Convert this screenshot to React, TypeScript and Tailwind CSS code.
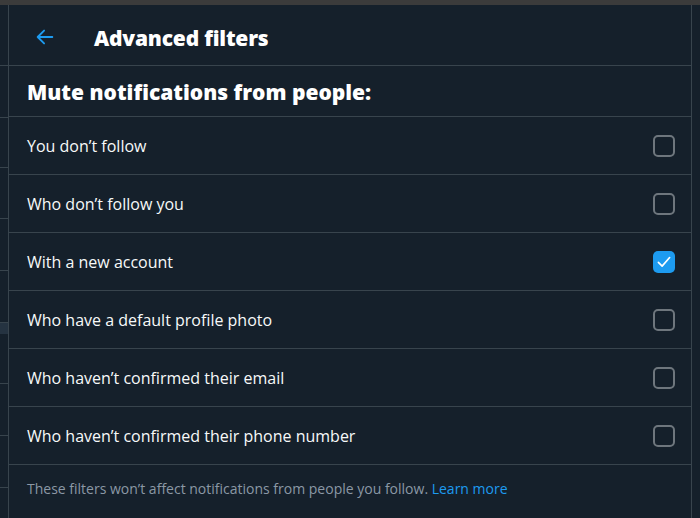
import React from 'react';

const rows = [
  { label: 'You don\u2019t follow', checked: false },
  { label: 'Who don\u2019t follow you', checked: false },
  { label: 'With a new account', checked: true },
  { label: 'Who have a default profile photo', checked: false },
  { label: 'Who haven\u2019t confirmed their email', checked: false },
  { label: 'Who haven\u2019t confirmed their phone number', checked: false },
];

const leftBlocks = ['h-[61px]', 'h-[52px]', 'h-[50px]', 'h-[51px]', 'h-[52px]', 'h-[52px]'];

const Checkbox = ({ checked }: { checked: boolean }) =>
  checked ? (
    <div className="w-[22px] h-[22px] rounded-[5px] bg-[#1d9bf0] flex items-center justify-center">
      <svg viewBox="0 0 24 24" className="w-[18px] h-[18px]" fill="none" stroke="white" strokeWidth="2.2" strokeLinecap="round" strokeLinejoin="round">
        <path d="M4.5 12.5l5 5L19.5 6" />
      </svg>
    </div>
  ) : (
    <div className="w-[22px] h-[22px] rounded-[5px] border-2 border-[#6e767d]" />
  );

export default function App() {
  return (
    <div className="w-[700px] h-[518px] overflow-hidden bg-[#15202b] text-white flex flex-col" style={{ fontFamily: '"Open Sans", "Noto Sans", sans-serif' }}>
      <div className="h-[5px] bg-[#3b3b3b] shrink-0" />
      <div className="flex flex-1 min-h-0">
        {/* left edge of page behind the modal */}
        <div className="w-[9px] border-r border-[#38444d] flex flex-col">
          {leftBlocks.map((h, i) => (
            <div key={i} className={`${h} border-b border-[#38444d]`} />
          ))}
          <div className="h-[11px] bg-[#253341]" />
          <div className="h-[50px] border-b border-[#38444d]" />
          <div className="h-[52px] border-b border-[#38444d]" />
          <div className="h-[52px] border-b border-[#38444d]" />
          <div className="flex-1" />
        </div>

        <div className="flex-1 flex flex-col">
          <div className="h-[61px] border-b border-[#38444d] flex items-center pl-[25px] pt-[4px]">
            <svg viewBox="0 0 24 24" className="w-[22px] h-[22px] text-[#1d9bf0]" fill="none" stroke="currentColor" strokeWidth="2" strokeLinecap="round" strokeLinejoin="round">
              <path d="M20 12H4M11 5l-7 7 7 7" />
            </svg>
            <h1 className="ml-[38px] mt-[3px] text-[21px] font-extrabold tracking-[-0.2px]">Advanced filters</h1>
          </div>
          <div className="h-[51px] border-b border-[#38444d] flex items-center pl-[18px] pt-[4px]">
            <h2 className="text-[21px] font-extrabold tracking-normal">Mute notifications from people:</h2>
          </div>
          {rows.map((r) => (
            <div key={r.label} className="h-[58px] border-b border-[#38444d] flex items-center justify-between pl-[18px] pr-[16px]">
              <span className="text-[16px] text-[#f7f9f9]">{r.label}</span>
              <Checkbox checked={r.checked} />
            </div>
          ))}
          <div className="pt-[13px] pl-[18px] text-[14px] text-[#8b98a5]">
            These filters won{'\u2019'}t affect notifications from people you follow.{' '}
            <a className="text-[#1d9bf0]">Learn more</a>
          </div>
        </div>

        <div className="w-[9px] border-l border-[#38444d]" />
      </div>
    </div>
  );
}
